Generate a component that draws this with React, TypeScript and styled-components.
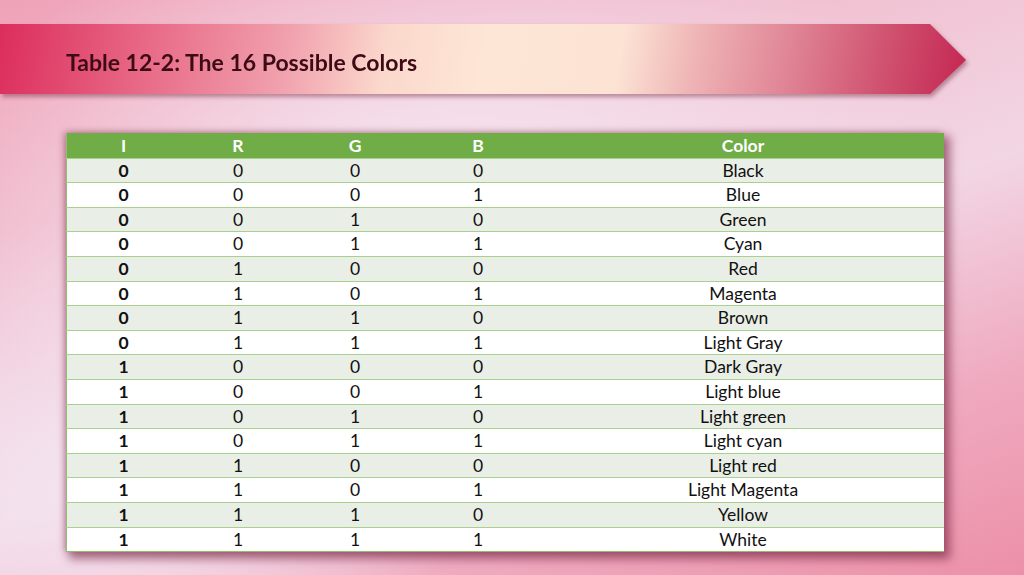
import React from 'react';
import styled, { createGlobalStyle } from 'styled-components';

const GlobalStyle = createGlobalStyle`
  html, body {
    margin: 0;
    padding: 0;
  }
  body {
    font-family: Lato, 'Open Sans', sans-serif;
  }
`;

// фон слайда
const Slide = styled.div`
  width: 1024px;
  height: 575px;
  overflow: hidden;
  display: flex;
  flex-direction: column;
  background:
    radial-gradient(ellipse 520px 300px at 450px 200px, rgba(246, 236, 246, 0.95), rgba(246, 236, 246, 0) 100%),
    radial-gradient(ellipse 360px 260px at 100px 480px, rgba(244, 230, 242, 0.9), rgba(244, 230, 242, 0) 100%),
    linear-gradient(160deg, #efa2b8 0%, #f1c4d4 35%, #f2d6e4 55%, #efaac0 78%, #ec90a8 100%);
`;

//! Title banner
const BannerShadow = styled.div`
  margin-top: 24px;
  width: 966px;
  height: 70px;
  filter: drop-shadow(2px 3px 2px rgba(110, 40, 60, 0.45));
`;

const Banner = styled.div`
  height: 100%;
  display: flex;
  align-items: center;
  padding: 6px 0 0 66px;
  box-sizing: border-box;
  clip-path: polygon(0 0, 930px 0, 966px 36px, 930px 70px, 0 70px);
  background: linear-gradient(
    100deg,
    #dc2d5c 0%,
    #e76482 14%,
    #f1a2ae 30%,
    #fbd8cc 40%,
    #fde6d6 50%,
    #fce3d4 64%,
    #eeb2b4 72%,
    #e08696 81%,
    #d05270 91%,
    #c42652 100%
  );
`;

const Title = styled.h1`
  margin: 0;
  font-family: Lato, sans-serif;
  font-weight: bold;
  font-size: 23px;
  color: #3d0b16;
`;

//! Table
const TableShadow = styled.div`
  margin: 39px 0 0 66px;
  width: 877px;
  box-shadow: 5px 5px 9px 2px rgba(120, 35, 65, 0.62), -2px -1px 6px rgba(120, 40, 70, 0.35);
`;

const Table = styled.table`
  width: 100%;
  border-collapse: collapse;
  table-layout: fixed;
  font-family: Lato, sans-serif;
  font-size: 17.5px;
  color: #111;
  border-left: 1px solid #8fbf6c;
  border-bottom: 1px solid #8fbf6c;
`;

const HeadCell = styled.th<{ $w: number }>`
  width: ${(p) => p.$w}px;
  height: 24.6px;
  padding: 0;
  background: #70ad47;
  color: #fff;
  font-weight: bold;
  text-align: center;
  line-height: 1;
`;

const Row = styled.tr<{ $odd: boolean }>`
  background: ${(p) => (p.$odd ? '#e9efe6' : '#ffffff')};
  border-top: 1px solid #a9d18e;
`;

const Cell = styled.td<{ $bold?: boolean }>`
  height: 23.6px;
  padding: 0;
  text-align: center;
  line-height: 1;
  font-weight: ${(p) => (p.$bold ? 'bold' : 'normal')};
`;

const columns = [
  { name: 'I', w: 113 },
  { name: 'R', w: 116 },
  { name: 'G', w: 118 },
  { name: 'B', w: 128 },
  { name: 'Color', w: 402 },
];

const colorNames = [
  'Black',
  'Blue',
  'Green',
  'Cyan',
  'Red',
  'Magenta',
  'Brown',
  'Light Gray',
  'Dark Gray',
  'Light blue',
  'Light green',
  'Light cyan',
  'Light red',
  'Light Magenta',
  'Yellow',
  'White',
];

export default function App() {
  return (
    <>
      <GlobalStyle />
      <Slide>
        <BannerShadow>
          <Banner>
            <Title>Table 12-2: The 16 Possible Colors</Title>
          </Banner>
        </BannerShadow>
        <TableShadow>
          <Table>
            <thead>
              <tr>
                {columns.map((c) => (
                  <HeadCell key={c.name} $w={c.w}>
                    {c.name}
                  </HeadCell>
                ))}
              </tr>
            </thead>
            <tbody>
              {colorNames.map((name, i) => {
                const bits = [3, 2, 1, 0].map((b) => (i >> b) & 1);
                return (
                  <Row key={name} $odd={i % 2 === 0}>
                    <Cell $bold>{bits[0]}</Cell>
                    <Cell>{bits[1]}</Cell>
                    <Cell>{bits[2]}</Cell>
                    <Cell>{bits[3]}</Cell>
                    <Cell>{name}</Cell>
                  </Row>
                );
              })}
            </tbody>
          </Table>
        </TableShadow>
      </Slide>
    </>
  );
}
